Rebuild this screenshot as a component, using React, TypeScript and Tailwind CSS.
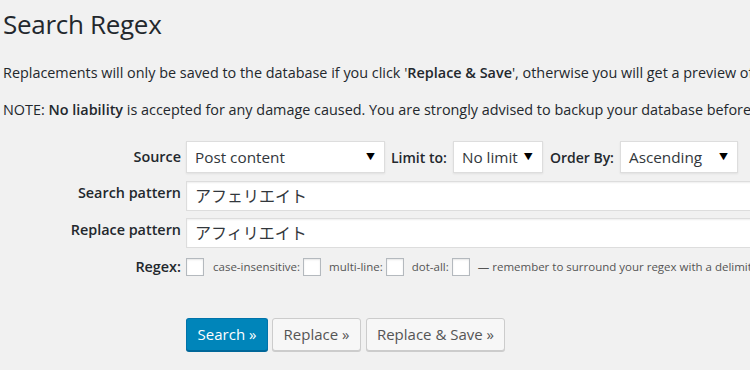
import React from 'react';

const font = { fontFamily: '"Open Sans", "Noto Sans CJK JP", sans-serif' };

const FakeSelect = ({ value, width }: { value: string; width: string }) => (
  <div
    className={`flex h-[32px] items-center justify-between border border-[#ddd] bg-white pl-[8px] pr-[9px] text-[15.3px] text-[#32373c] shadow-[0_1px_2px_rgba(0,0,0,0.07)] ${width}`}
  >
    <span>{value}</span>
    <span className="text-[9px] text-black">▼</span>
  </div>
);

const TextBox = ({ value }: { value: string }) => (
  <div className="flex h-[30px] w-[640px] items-center border border-[#ddd] bg-white pl-[8px] text-[16px] text-[#32373c] shadow-[inset_0_1px_2px_rgba(0,0,0,0.07)]">
    {value}
  </div>
);

const Box = () => (
  <span className="inline-block h-[18px] w-[18px] shrink-0 border border-[#b4b9be] bg-white shadow-[inset_0_1px_2px_rgba(0,0,0,0.1)]" />
);

export default function App() {
  return (
    <div style={font} className="h-[370px] w-[750px] overflow-hidden bg-[#f1f1f1] pl-[3px] text-[#23282d]">
      <h1 className="pt-[6px] text-[26px] leading-[36px] font-normal tracking-[-0.3px]">Search Regex</h1>

      <p className="mt-[20px] whitespace-nowrap text-[14.4px] leading-[22px]">
        Replacements will only be saved to the database if you click '<b className="font-semibold">Replace &amp; Save</b>', otherwise you will get a preview of the results.
      </p>
      <p className="mt-[15px] whitespace-nowrap text-[14.4px] leading-[22px]">
        NOTE: <b className="font-semibold">No liability</b> is accepted for any damage caused. You are strongly advised to backup your database before making changes.
      </p>

      <div className="mt-[20px] grid grid-cols-[178px_1fr] gap-x-[5px] text-[14.4px]">
        <div className="flex h-[32px] items-center justify-end font-semibold">Source</div>
        <div className="flex items-center text-[14px]">
          <FakeSelect value="Post content" width="w-[199px]" />
          <span className="ml-[6px] mr-[6px] font-semibold">Limit to:</span>
          <FakeSelect value="No limit" width="w-[90px]" />
          <span className="ml-[7px] mr-[6px] font-semibold">Order By:</span>
          <FakeSelect value="Ascending" width="w-[118px]" />
        </div>

        <div className="mt-[8px] pt-[1px] text-right font-semibold">Search pattern</div>
        <div className="mt-[8px]">
          <TextBox value="アフェリエイト" />
        </div>

        <div className="mt-[7px] pt-[1px] text-right font-semibold">Replace pattern</div>
        <div className="mt-[7px]">
          <TextBox value="アフィリエイト" />
        </div>

        <div className="mt-[9px] flex h-[20px] items-center justify-end font-semibold">Regex:</div>
        <div className="mt-[9px] flex h-[20px] items-center whitespace-nowrap text-[11.5px] text-[#555]">
          <Box />
          <span className="ml-[9px] mr-[3px]">case-insensitive:</span>
          <Box />
          <span className="ml-[8px] mr-[3px]">multi-line:</span>
          <Box />
          <span className="ml-[8px] mr-[3px]">dot-all:</span>
          <Box />
          <span className="ml-[8px]">— remember to surround your regex with a delimiter!</span>
        </div>
      </div>

      <div className="mt-[41px] flex pl-[183px] text-[15px]">
        <button className="h-[33px] w-[82px] rounded-[3px] border border-[#0073aa] border-b-[#006799] bg-[#0085ba] text-white shadow-[0_1px_0_#006799]">
          Search »
        </button>
        <button className="ml-[4px] h-[33px] w-[89px] rounded-[3px] border border-[#ccc] bg-[#f7f7f7] text-[#555] shadow-[0_1px_0_#ccc]">
          Replace »
        </button>
        <button className="ml-[5px] h-[33px] w-[139px] rounded-[3px] border border-[#ccc] bg-[#f7f7f7] text-[#555] shadow-[0_1px_0_#ccc]">
          Replace &amp; Save »
        </button>
      </div>
    </div>
  );
}
